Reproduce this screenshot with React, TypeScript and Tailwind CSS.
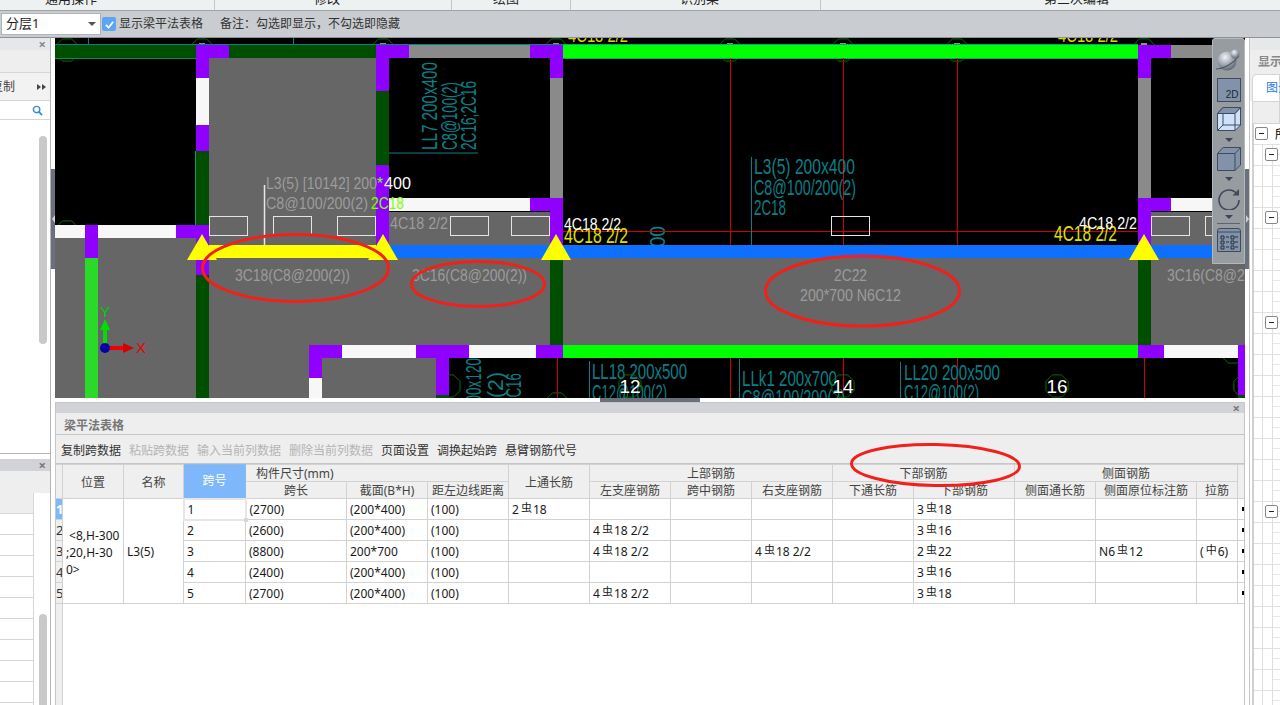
import React from "react";

const TEAL = "#0b7f86";
const GREY = "#666666";
const PURPLE = "#8f00ff";
const DG = "#004f00";
const LG = "#00ff00";
const WH = "#f7f7f7";
const MID = "#8a8a8a";
const LABEL = "#9c9c9c";

type Box = [number, number, number, number, string];

const rects: Box[] = [
  [209, 58, 167, 187, GREY],
  [389, 212, 161, 33, GREY],
  [1151, 212, 94, 33, GREY],
  [55, 238, 141, 160, GREY],
  [55, 258, 1190, 87, GREY],
  [196, 345, 113, 53, GREY],
  [322, 358, 114, 40, GREY],
  [55, 45, 141, 13, DG],
  [229, 45, 147, 13, DG],
  [196, 45, 33, 13, PURPLE],
  [196, 58, 13, 20, PURPLE],
  [196, 78, 13, 47, WH],
  [196, 125, 13, 26, PURPLE],
  [196, 151, 13, 74, DG],
  [376, 45, 33, 13, PURPLE],
  [376, 58, 13, 33, PURPLE],
  [376, 91, 13, 74, DG],
  [376, 165, 13, 80, PURPLE],
  [409, 45, 121, 13, MID],
  [530, 45, 33, 13, PURPLE],
  [550, 58, 13, 20, PURPLE],
  [550, 78, 13, 120, MID],
  [530, 198, 33, 13, PURPLE],
  [550, 211, 13, 34, PURPLE],
  [389, 198, 141, 13, WH],
  [563, 45, 575, 13, LG],
  [1138, 45, 33, 13, PURPLE],
  [1138, 58, 13, 20, PURPLE],
  [1138, 78, 13, 120, MID],
  [1138, 198, 33, 13, PURPLE],
  [1138, 211, 13, 34, PURPLE],
  [1171, 45, 74, 13, MID],
  [1171, 198, 74, 13, WH],
  [55, 225, 30, 13, WH],
  [85, 225, 13, 13, PURPLE],
  [98, 225, 78, 13, WH],
  [176, 225, 33, 13, PURPLE],
  [85, 238, 13, 20, PURPLE],
  [85, 258, 13, 140, "#2bd92b"],
  [196, 238, 13, 37, PURPLE],
  [196, 275, 13, 123, DG],
  [209, 245, 167, 13, "#ffff00"],
  [389, 245, 856, 13, "#0f6fff"],
  [550, 258, 13, 87, DG],
  [1138, 258, 13, 87, DG],
  [309, 345, 33, 13, PURPLE],
  [342, 345, 74, 13, WH],
  [416, 345, 53, 13, PURPLE],
  [469, 345, 67, 13, WH],
  [536, 345, 27, 13, PURPLE],
  [563, 345, 575, 13, LG],
  [1138, 345, 26, 13, PURPLE],
  [1164, 345, 74, 13, WH],
  [1238, 345, 7, 50, PURPLE],
  [1238, 395, 7, 3, DG],
  [309, 358, 13, 20, PURPLE],
  [309, 378, 13, 20, WH],
  [436, 358, 13, 37, PURPLE],
  [436, 395, 13, 3, DG],
];

const hexes = [
  [67, 50], [202, 50], [383, 50], [556, 50], [730, 50], [843, 50], [957, 50], [1144, 50], [67, 232],
  [449, 386], [1245, 386], [1233, 352], [557, 404],
];

function Hex({ x, y, r = 12 }: { x: number; y: number; r?: number }) {
  const pts = [0, 1, 2, 3, 4, 5, 6, 7]
    .map((i) => {
      const a = (Math.PI * 2 * i) / 8 + Math.PI / 8;
      return `${x + r * Math.cos(a)},${y + r * Math.sin(a)}`;
    })
    .join(" ");
  return <polygon points={pts} fill="none" stroke="#0a6b0a" strokeWidth="1" />;
}

function T(p: { x: number; y: number; w: number; s?: number; c: string; t: string; r?: boolean }) {
  return (
    <text
      x={p.x}
      y={p.y}
      fontSize={p.s ?? 16}
      fill={p.c}
      textLength={p.w}
      lengthAdjust="spacingAndGlyphs"
      fontFamily="'Liberation Sans', sans-serif"
      transform={p.r ? `rotate(-90 ${p.x} ${p.y})` : undefined}
    >
      {p.t}
    </text>
  );
}

function Canvas() {
  const boxes = [209, 273, 337, 450, 511, 831, 1151, 1205];
  return (
    <svg viewBox="55 38 1190 360" className="block w-[1190px] h-[360px] bg-black shrink-0">
      {hexes.map(([x, y], i) => (
        <Hex key={i} x={x} y={y} />
      ))}
      {[202, 383, 556, 730, 843, 957, 1144].map((x) => (
        <rect key={x} x={x - 3} y={43} width={6} height={2} fill="#8f8f8f" />
      ))}
      <line x1="55" y1="44.5" x2="563" y2="44.5" stroke={TEAL} />
      <line x1="88.5" y1="38" x2="88.5" y2="44" stroke={TEAL} />
      <line x1="293.5" y1="38" x2="293.5" y2="44" stroke={TEAL} />
      <T x={665} y={258} w={32} s={22} c={TEAL} t="500" r />
      {rects.map(([x, y, w, h, c], i) => (
        <rect key={i} x={x} y={y} width={w} height={h} fill={c} />
      ))}
      <line x1="55" y1="58.5" x2="196" y2="58.5" stroke="#0a8a5a" />
      <line x1="563" y1="44.5" x2="1138" y2="44.5" stroke="#0aa870" />
      <line x1="563" y1="58.5" x2="1138" y2="58.5" stroke="#0aa870" />
      <line x1="195.5" y1="151" x2="195.5" y2="225" stroke="#0a9a70" />
      <line x1="389" y1="153" x2="478" y2="153" stroke={TEAL} />

      {/* red axis lines */}
      {[730, 843, 957].map((x) => (
        <line key={x} x1={x + 0.5} y1="58" x2={x + 0.5} y2="245" stroke="#d00000" />
      ))}
      <line x1="563" y1="231.5" x2="1138" y2="231.5" stroke="#d00000" />
      {[557, 730, 843, 957, 1144].map((x) => (
        <line key={x} x1={x + 0.5} y1="358" x2={x + 0.5} y2="398" stroke="#d00000" />
      ))}

      {/* teal CAD text */}
      <line x1="751.5" y1="157" x2="751.5" y2="245" stroke={TEAL} />
      <T x={754} y={174} w={101} s={22} c={TEAL} t="L3(5) 200x400" />
      <T x={754} y={195} w={102} s={22} c={TEAL} t="C8@100/200(2)" />
      <T x={754} y={215} w={32} s={22} c={TEAL} t="2C18" />
      <T x={437} y={150} w={88} s={22} c={TEAL} t="LL7 200x400" r />
      <T x={457} y={150} w={68} s={22} c={TEAL} t="C8@100(2)" r />
      <T x={476} y={150} w={69} s={22} c={TEAL} t="2C16;2C16" r />
      <line x1="589.5" y1="361" x2="589.5" y2="398" stroke={TEAL} />
      <T x={592} y={379} w={95} s={22} c={TEAL} t="LL18 200x500" />
      <T x={592} y={400} w={75} s={22} c={TEAL} t="C12@100(2)" />
      <line x1="739.5" y1="359" x2="739.5" y2="398" stroke={TEAL} />
      <T x={742} y={386} w={95} s={22} c={TEAL} t="LLk1 200x700" />
      <T x={742} y={405} w={103} s={22} c={TEAL} t="C8@100/200(2)" />
      <line x1="900.5" y1="362" x2="900.5" y2="398" stroke={TEAL} />
      <T x={904} y={380} w={96} s={22} c={TEAL} t="LL20 200x500" />
      <T x={904} y={400} w={75} s={22} c={TEAL} t="C12@100(2)" />
      <T x={481} y={410} w={52} s={22} c={TEAL} t="200x120" r />
      <T x={503} y={398} w={26} s={22} c={TEAL} t="(2)" r />
      <T x={521} y={405} w={32} s={22} c={TEAL} t="2C16" r />

      {/* beams' labels on grey */}
      <line x1="264.5" y1="185" x2="264.5" y2="245" stroke="#e8e8e8" strokeWidth="1.5" />
      <T x={266} y={189} w={111} s={17} c={LABEL} t="L3(5) [10142] 200" />
      <T x={377} y={189} w={6} s={17} c="#7fff00" t="*" />
      <T x={384} y={189} w={27} s={17} c="#ffffff" t="400" />
      <T x={266} y={209} w={102} s={17} c={LABEL} t="C8@100/200(2)" />
      <T x={371} y={209} w={33} s={17} c="#7fff00" t="2C18" />
      <T x={390} y={229} w={58} s={17} c={LABEL} t="4C18 2/2" />
      <T x={235} y={281} w={115} s={17} c={LABEL} t="3C18(C8@200(2))" />
      <T x={412} y={281} w={115} s={17} c={LABEL} t="3C16(C8@200(2))" />
      <T x={834} y={281} w={33} s={17} c={LABEL} t="2C22" />
      <T x={800} y={301} w={101} s={17} c={LABEL} t="200*700 N6C12" />
      <T x={1167} y={281} w={115} s={17} c={LABEL} t="3C16(C8@200(2))" />

      {/* yellow & white reinforcement text */}
      <T x={568} y={42} w={60} s={20} c="#d8d800" t="4C18 2/2" />
      <T x={1058} y={42} w={60} s={20} c="#d8d800" t="4C18 2/2" />
      <T x={564} y={243} w={64} s={22} c="#e0e000" t="4C18 2/2" />
      <T x={1054} y={241} w={63} s={22} c="#e0e000" t="4C18 2/2" />
      <T x={564} y={230} w={57} s={16} c="#ffffff" t="4C18 2/2" />
      <T x={1079} y={229} w={58} s={16} c="#ffffff" t="4C18 2/2" />

      {boxes.map((x) => (
        <rect key={x} x={x + 0.5} y={216.5} width={38} height={19} fill="none" stroke="#e4e4e4" strokeWidth="1" />
      ))}

      {/* supports */}
      {[202, 383, 556, 1144].map((x) => (
        <polygon key={x} points={`${x},234 ${x + 15},260 ${x - 15},260`} fill="#ffff00" />
      ))}

      {/* axis numbers */}
      {[
        [630, "12"],
        [843, "14"],
        [1057, "16"],
      ].map(([x, n]) => (
        <g key={n as string}>
          <Hex x={x as number} y={386} r={12} />
          <text
            x={x as number}
            y={393}
            fontSize="19"
            fill="#ffffff"
            textAnchor="middle"
            fontFamily="'Liberation Sans', sans-serif"
          >
            {n}
          </text>
        </g>
      ))}

      {/* coordinate system */}
      <line x1="105" y1="348" x2="105" y2="328" stroke="#00e000" strokeWidth="4" />
      <polygon points="105,319 110,330 100,330" fill="#00e000" />
      <line x1="105" y1="348" x2="124" y2="348" stroke="#f00000" strokeWidth="4" />
      <polygon points="134,348 123,343 123,353" fill="#d80000" />
      <circle cx="105" cy="348" r="5" fill="#0000a8" />
      <T x={100} y={317} w={10} s={14} c="#00d000" t="Y" />
      <T x={136} y={353} w={10} s={14} c="#f00000" t="X" />
    </svg>
  );
}

function ToolRail() {
  const Arrow = () => <div className="w-0 h-0 border-l-[4px] border-r-[4px] border-t-[4px] border-l-transparent border-r-transparent border-t-[#3d4652]" />;
  return (
    <div className="absolute right-0 top-0 w-[33px] h-[226px] bg-[#979ca1] border border-[#b4b8bc] rounded-t-[3px] flex flex-col items-center pt-[9px]">
      <svg viewBox="0 0 26 24" className="w-[26px] h-[24px] -ml-[2px]">
        <defs>
          <radialGradient id="sph" cx="0.4" cy="0.3" r="0.8">
            <stop offset="0" stopColor="#f2f4f6" />
            <stop offset="0.5" stopColor="#9ea6b0" />
            <stop offset="1" stopColor="#4d5560" />
          </radialGradient>
        </defs>
        <circle cx="12" cy="13" r="9.5" fill="url(#sph)" />
        <path d="M1 21 C8 21 18 16 24 8" fill="none" stroke="#4d5560" strokeWidth="1.2" />
        <circle cx="20" cy="6" r="4.5" fill="url(#sph)" />
      </svg>
      <div className="mt-[6px] w-[24px] h-[24px] bg-[#8292aa] border border-[#3f4a5c] flex items-end justify-end pr-[1px] text-[10px] leading-[12px] text-[#1e2733] font-['Liberation_Sans',sans-serif]">
        2D
      </div>
      <svg viewBox="0 0 24 24" className="mt-[5px] w-[24px] h-[24px]">
        <path d="M0.5 6.5 L6 0.5 H23.5 V18 L18 23.5 H0.5 Z" fill="#cfe2fb" stroke="#3f4a5c" />
        <path d="M0.5 6.5 H18 V23.5 M18 6.5 L23.5 0.5 M6 0.5 V18 H23.5 M6 18 L0.5 23.5" fill="none" stroke="#3f4a5c" />
        <path d="M0.5 6.5 L6 0.5 H23.5 L18 6.5 Z" fill="#8292aa" stroke="#3f4a5c" />
      </svg>
      <div className="mt-[7px]"><Arrow /></div>
      <svg viewBox="0 0 24 24" className="mt-[5px] w-[24px] h-[24px]">
        <path d="M0.5 6.5 L6 0.5 H23.5 V18 L18 23.5 H0.5 Z" fill="#8292aa" stroke="#3f4a5c" />
        <path d="M0.5 6.5 H18 V23.5 M18 6.5 L23.5 0.5" fill="none" stroke="#3f4a5c" />
      </svg>
      <div className="mt-[6px]"><Arrow /></div>
      <svg viewBox="0 0 24 24" className="mt-[5px] w-[24px] h-[24px]">
        <path d="M20 8 A10 10 0 1 0 22 14" fill="none" stroke="#3f4a5c" strokeWidth="1.6" />
        <path d="M22 3 V9.5 H15.5 Z" fill="#3f4a5c" />
      </svg>
      <div className="mt-[5px]"><Arrow /></div>
      <div className="mt-[4px] w-[23px] h-px bg-[#5b6470]" />
      <svg viewBox="0 0 24 24" className="mt-[4px] w-[24px] h-[24px]">
        <path d="M0.5 3 Q0.5 0.5 3 0.5 H21 Q23.5 0.5 23.5 3 V23.5 H0.5 Z" fill="#8292aa" stroke="#3f4a5c" />
        <path d="M0.5 4 H23.5" stroke="#3f4a5c" />
        <path d="M4 8 H7 V11 H4 Z M4 13 H7 V16 H4 Z M4 18 H7 V21 H4 Z M14 8 H17 V11 H14 Z M14 13 H17 V16 H14 Z M14 18 H17 V21 H14 Z M9 9 H12 M9 14 H12 M9 19 H12 M18 9 H21 M18 14 H21 M18 19 H21" fill="none" stroke="#26303c" />
      </svg>
    </div>
  );
}

function Rebar({ a, b, sym = "虫" }: { a: string; b: string; sym?: string }) {
  return (
    <>
      {a}
      <span className="relative -top-[2px] ml-[2px] mr-[1px] text-[11px]">{sym}</span>
      {b}
    </>
  );
}

type Row = {
  n: string;
  len: string;
  sec: string;
  top?: React.ReactNode;
  left?: React.ReactNode;
  right?: React.ReactNode;
  bottom: React.ReactNode;
  orig?: React.ReactNode;
  tie?: React.ReactNode;
};

const support = <Rebar a="4" b="18 2/2" />;
const tableRows: Row[] = [
  { n: "1", len: "(2700)", sec: "(200*400)", top: <Rebar a="2" b="18" />, bottom: <Rebar a="3" b="18" /> },
  { n: "2", len: "(2600)", sec: "(200*400)", left: support, bottom: <Rebar a="3" b="16" /> },
  {
    n: "3",
    len: "(8800)",
    sec: "200*700",
    left: support,
    right: support,
    bottom: <Rebar a="2" b="22" />,
    orig: <Rebar a="N6" b="12" />,
    tie: <>(<Rebar a="" b="6)" sym="中" /></>,
  },
  { n: "4", len: "(2400)", sec: "(200*400)", bottom: <Rebar a="3" b="16" /> },
  { n: "5", len: "(2700)", sec: "(200*400)", left: support, bottom: <Rebar a="3" b="18" /> },
];

const widths = [7, 61, 60, 62, 101, 81, 81, 81, 81, 81, 81, 81, 101, 81, 101, 41, 7];

function BeamTable() {
  const th = "border border-[#d2d2d2] bg-[#efefef] font-normal text-[#444] text-center px-0 pb-0 pt-[2px] leading-[14px] overflow-hidden whitespace-nowrap";
  const td = "border border-[#d2d2d2] px-[3px] pb-0 pt-[2px] text-left whitespace-nowrap overflow-hidden";
  return (
    <table className="table-fixed border-collapse -ml-px w-[1189px] shrink-0 text-[12px] leading-[16px] text-[#1a1a1a]">
      <colgroup>
        {widths.map((w, i) => (
          <col key={i} width={w} />
        ))}
      </colgroup>
      <thead>
        <tr className="h-[17px]">
          <th rowSpan={2} className={th}></th>
          <th rowSpan={2} className={th}>位置</th>
          <th rowSpan={2} className={th}>名称</th>
          <th rowSpan={2} className="border border-[#8fb9e8] bg-[#7eb8fa] text-white font-normal text-center p-0">跨号</th>
          <th colSpan={3} className={`${th} !text-left pl-[10px]`}>构件尺寸(mm)</th>
          <th rowSpan={2} className={th}>上通长筋</th>
          <th colSpan={3} className={th}>上部钢筋</th>
          <th colSpan={2} className={th}>下部钢筋</th>
          <th colSpan={3} className={th}>侧面钢筋</th>
          <th rowSpan={2} className={th}></th>
        </tr>
        <tr className="h-[17px]">
          {["跨长", "截面(B*H)", "距左边线距离"].map((t) => (
            <th key={t} className={th}>{t}</th>
          ))}
          {["左支座钢筋", "跨中钢筋", "右支座钢筋", "下通长筋", "下部钢筋", "侧面通长筋", "侧面原位标注筋", "拉筋"].map((t) => (
            <th key={t} className={th}>{t}</th>
          ))}
        </tr>
      </thead>
      <tbody>
        {tableRows.map((r, i) => (
          <tr key={r.n} className="h-[21px]">
            <td className={`border border-[#d2d2d2] p-0 text-[13px] overflow-hidden text-center ${i === 0 ? "bg-[#7eb8fa] text-white font-bold" : "bg-[#efefef] text-[#333]"}`}>
              {r.n}
            </td>
            {i === 0 && (
              <td rowSpan={5} className="border border-[#d2d2d2] pl-[3px] pr-0 pt-[2px] leading-[17px] whitespace-nowrap">
                &nbsp;&lt;8,H-300
                <br />;20,H-30
                <br />0&gt;
              </td>
            )}
            {i === 0 && (
              <td rowSpan={5} className={td}>L3(5)</td>
            )}
            <td className={i === 0 ? "relative border-2 border-[#e6e6e6] px-[3px] pb-0 pt-[2px]" : td}>
              {r.n}
              {i === 0 && <span className="absolute -right-[3px] -bottom-[3px] w-[4px] h-[4px] bg-[#d8d8d8]" />}
            </td>
            <td className={td}>{r.len}</td>
            <td className={td}>{r.sec}</td>
            <td className={td}>(100)</td>
            <td className={td}>{r.top}</td>
            <td className={td}>{r.left}</td>
            <td className={td}></td>
            <td className={td}>{r.right}</td>
            <td className={td}></td>
            <td className={td}>{r.bottom}</td>
            <td className={td}></td>
            <td className={td}>{r.orig}</td>
            <td className={td}>{r.tie}</td>
            <td className="border border-[#d2d2d2] p-0">
              <div className="ml-[4px] w-[2px] h-[4px] bg-black" />
            </td>
          </tr>
        ))}
      </tbody>
    </table>
  );
}

function TableArea() {
  return (
    <div className="flex-1 min-h-0 flex flex-col border-x border-[#c6c6c6] bg-white overflow-hidden">
      <div className="h-[10px] bg-[#d2d3d9] flex items-center justify-end pr-[4px] text-[#777] text-[13px] font-bold leading-none shrink-0">×</div>
      <div className="h-[22px] bg-[#eeeeee] border-b border-[#c6c6c6] pl-[8px] text-[12px] leading-[25px] font-bold text-[#777] shrink-0 overflow-hidden">梁平法表格</div>
      <div className="h-[29px] bg-[#eeeeee] border-b border-[#c6c6c6] pl-[5px] pt-[4px] flex items-center gap-2 text-[12px] text-[#333] shrink-0">
        <span>复制跨数据</span>
        <span className="text-[#b4b4b4]">粘贴跨数据</span>
        <span className="text-[#b4b4b4]">输入当前列数据</span>
        <span className="text-[#b4b4b4]">删除当前列数据</span>
        <span>页面设置</span>
        <span>调换起始跨</span>
        <span>悬臂钢筋代号</span>
      </div>
      <BeamTable />
      <div className="flex-1 w-[7px] bg-[#efefef] border-r border-[#d2d2d2]" />
    </div>
  );
}

function LeftColumn() {
  return (
    <div className="w-[51px] shrink-0 flex flex-col border-r border-[#b5b5b5] bg-white text-[12px]">
      <div className="h-[12px] bg-[#e6e7ea] flex items-center justify-end pr-[4px] text-[#888] font-bold text-[13px] leading-none shrink-0">×</div>
      <div className="h-[23px] bg-[#eeeeee] border-b border-[#d6d6d6] shrink-0" />
      <div className="h-[28px] bg-[#f2f2f2] border-b border-[#d6d6d6] flex items-center justify-between pr-[4px] shrink-0 overflow-hidden">
        <span className="w-[15px] overflow-hidden whitespace-nowrap flex justify-end text-[#444]"><span className="shrink-0">复制</span></span>
        <span className="flex">
          <span className="w-0 h-0 border-y-[3px] border-l-[4px] border-y-transparent border-l-[#444]" />
          <span className="ml-[1px] w-0 h-0 border-y-[3px] border-l-[4px] border-y-transparent border-l-[#444]" />
        </span>
      </div>
      <div className="h-[19px] border-b border-[#d6d6d6] flex items-center justify-end pr-[7px] shrink-0">
        <svg viewBox="0 0 12 12" className="w-[11px] h-[11px]">
          <circle cx="5" cy="5" r="3.5" fill="none" stroke="#3a8fc8" strokeWidth="1.6" />
          <path d="M7.5 7.5 L11 11" stroke="#3a8fc8" strokeWidth="2" />
        </svg>
      </div>
      <div className="h-[334px] border-b border-[#b5b5b5] pt-[16px] pl-[39px] shrink-0">
        <div className="w-[8px] h-[208px] rounded-full bg-[#c9c9c9]" />
      </div>
      <div className="h-[5px] shrink-0" />
      <div className="h-[12px] bg-[#d2d3d9] flex items-center justify-end pr-[4px] text-[#777] font-bold text-[13px] leading-none shrink-0">×</div>
      <div className="h-[22px] bg-[#eeeeee] shrink-0" />
      <div className="flex flex-1 min-h-0 overflow-hidden">
        <div className="w-[34px] border-r border-[#d6d6d6] flex flex-col shrink-0">
          <div className="h-[21px] bg-[#eeeeee] border-b border-[#d6d6d6] shrink-0" />
          {Array.from({ length: 9 }).map((_, i) => (
            <div key={i} className="h-[21px] border-b border-[#d6d6d6] shrink-0" />
          ))}
        </div>
        <div className="pl-[5px] pt-[121px]">
          <div className="w-[8px] h-[110px] rounded-full bg-[#c9c9c9]" />
        </div>
      </div>
    </div>
  );
}

function Splitter({ side }: { side: "l" | "r" }) {
  return (
    <div className="w-[4px] shrink-0 pt-[131px] bg-white">
      <div className="relative h-[100px] bg-[#69727c]">
        <span
          className={
            side === "l"
              ? "absolute top-[46px] left-[1px] w-0 h-0 border-y-[4px] border-r-[3px] border-y-transparent border-r-[#cfd2d6]"
              : "absolute top-[46px] left-[1px] w-0 h-0 border-y-[4px] border-l-[3px] border-y-transparent border-l-[#cfd2d6]"
          }
        />
      </div>
    </div>
  );
}

function MinusBox() {
  return (
    <span className="block w-[13px] h-[13px] bg-white border border-[#888] rounded-[2px] relative">
      <span className="absolute left-[3px] top-[5px] w-[5px] h-px bg-[#222]" />
    </span>
  );
}

function RightColumn() {
  const boxed = new Set([1, 4, 9, 18]);
  return (
    <div className="flex-1 min-w-0 flex flex-col border-l border-[#c8c8c8] overflow-hidden">
      <div className="h-[12px] bg-[#e6e8ea] shrink-0" />
      <div className="h-[24px] bg-[#eeeeee] pl-[8px] text-[12px] leading-[23px] font-bold text-[#888] whitespace-nowrap shrink-0">显示设置</div>
      <div className="h-[27px] bg-[#eeeeee] pl-[2px] shrink-0">
        <div className="h-[27px] bg-white border border-b-0 border-[#d4d4d4] rounded-tl-[5px] pl-[13px] text-[12px] leading-[25px] text-[#2a7be0] whitespace-nowrap">图元显示</div>
      </div>
      <div className="ml-[2px] h-[23px] bg-[#eeeeee] border border-[#d4d4d4] shrink-0" />
      <div className="ml-[2px] border-l-2 border-[#d0d0d0] flex-1 overflow-hidden bg-white">
        {Array.from({ length: 28 }).map((_, i) => (
          <div key={i} className="relative h-[21px] flex border-b border-[#e0e0e0]">
            {i === 0 ? (
              <>
                <span className="absolute left-[1px] top-[3px]"><MinusBox /></span>
                <span className="absolute left-[21px] top-0 text-[12px] leading-[19px] text-black whitespace-nowrap font-['Noto_Sans_CJK_SC',sans-serif]">所有构件</span>
              </>
            ) : (
              <>
                <div className="w-[9px] border-r border-[#e0e0e0]" />
                <div className="w-[10px] border-r border-[#e0e0e0]" />
                <div className="flex-1 h-[10px] border-b border-[#e8e8e8]" />
                {boxed.has(i) && (
                  <span className="absolute left-[11px] top-[3px]"><MinusBox /></span>
                )}
              </>
            )}
          </div>
        ))}
      </div>
    </div>
  );
}

export default function App() {
  const cap = "h-[10px] flex items-start border-l border-[#c4c6c8]";
  return (
    <div className="relative w-[1280px] h-[705px] overflow-hidden bg-white font-['Noto_Sans','Noto_Sans_CJK_SC',sans-serif]">
      {/* clipped ribbon captions */}
      <div className="h-[11px] bg-[#eef1f1] border-b border-[#a0a2a4] flex text-[13px] leading-[16px] text-[#222] overflow-hidden">
        <div className="w-[214px] h-[10px] flex items-start pl-[45px]"><span className="-mt-[10px] whitespace-nowrap">通用操作</span></div>
        <div className={`w-[237px] pl-[99px] ${cap}`}><span className="-mt-[10px] whitespace-nowrap">修改</span></div>
        <div className={`w-[119px] pl-[41px] ${cap}`}><span className="-mt-[10px] whitespace-nowrap">绘图</span></div>
        <div className={`w-[250px] pl-[109px] ${cap}`}><span className="-mt-[10px] whitespace-nowrap">识别梁</span></div>
        <div className={`flex-1 pl-[223px] ${cap}`}><span className="-mt-[10px] whitespace-nowrap">第三次编辑</span></div>
      </div>

      {/* option bar */}
      <div className="h-[27px] bg-[#c9ccd0] border-b border-[#8f9296] flex items-center pl-[1px] text-[12px] text-[#333]">
        <div className="w-[100px] h-[22px] bg-white border border-[#b0b3b7] flex items-center justify-between pl-[4px] pr-[4px] text-[13px] text-[#222]">
          <span>分层1</span>
          <span className="w-0 h-0 border-x-[4px] border-t-[4px] border-x-transparent border-t-[#555]" />
        </div>
        <span className="ml-[1px] w-[14px] h-[14px] rounded-[2px] bg-[#5aa6f5] flex items-center justify-center">
          <svg viewBox="0 0 12 12" className="w-[11px] h-[11px]">
            <path d="M2 6.5 L5 9.5 L10 3" fill="none" stroke="#ffffff" strokeWidth="2" />
          </svg>
        </span>
        <span className="ml-[3px]">显示梁平法表格</span>
        <span className="ml-[17px]">备注：勾选即显示，不勾选即隐藏</span>
      </div>

      {/* work area */}
      <div className="flex h-[667px]">
        <LeftColumn />
        <Splitter side="l" />
        <div className="relative w-[1190px] shrink-0 flex flex-col">
          <Canvas />
          <div className="h-[5px] shrink-0 bg-white flex justify-center border-b border-[#c6c6c6]">
            <div className="w-[100px] h-[4px] bg-[#69727c]" />
          </div>
          <TableArea />
          <ToolRail />
        </div>
        <Splitter side="r" />
        <RightColumn />
      </div>

      {/* hand-drawn red annotation ellipses */}
      <svg viewBox="0 0 1280 705" className="absolute inset-0 w-[1280px] h-[705px] pointer-events-none">
        <g fill="none" stroke="#f2201a" strokeWidth="3">
          <ellipse cx="295.5" cy="268" rx="93" ry="33.5" />
          <ellipse cx="478" cy="284" rx="66.5" ry="22.5" />
          <ellipse cx="862.5" cy="291" rx="97" ry="35" />
          <ellipse cx="935.5" cy="465" rx="84" ry="20.5" transform="rotate(1 935 465)" />
        </g>
      </svg>
    </div>
  );
}
